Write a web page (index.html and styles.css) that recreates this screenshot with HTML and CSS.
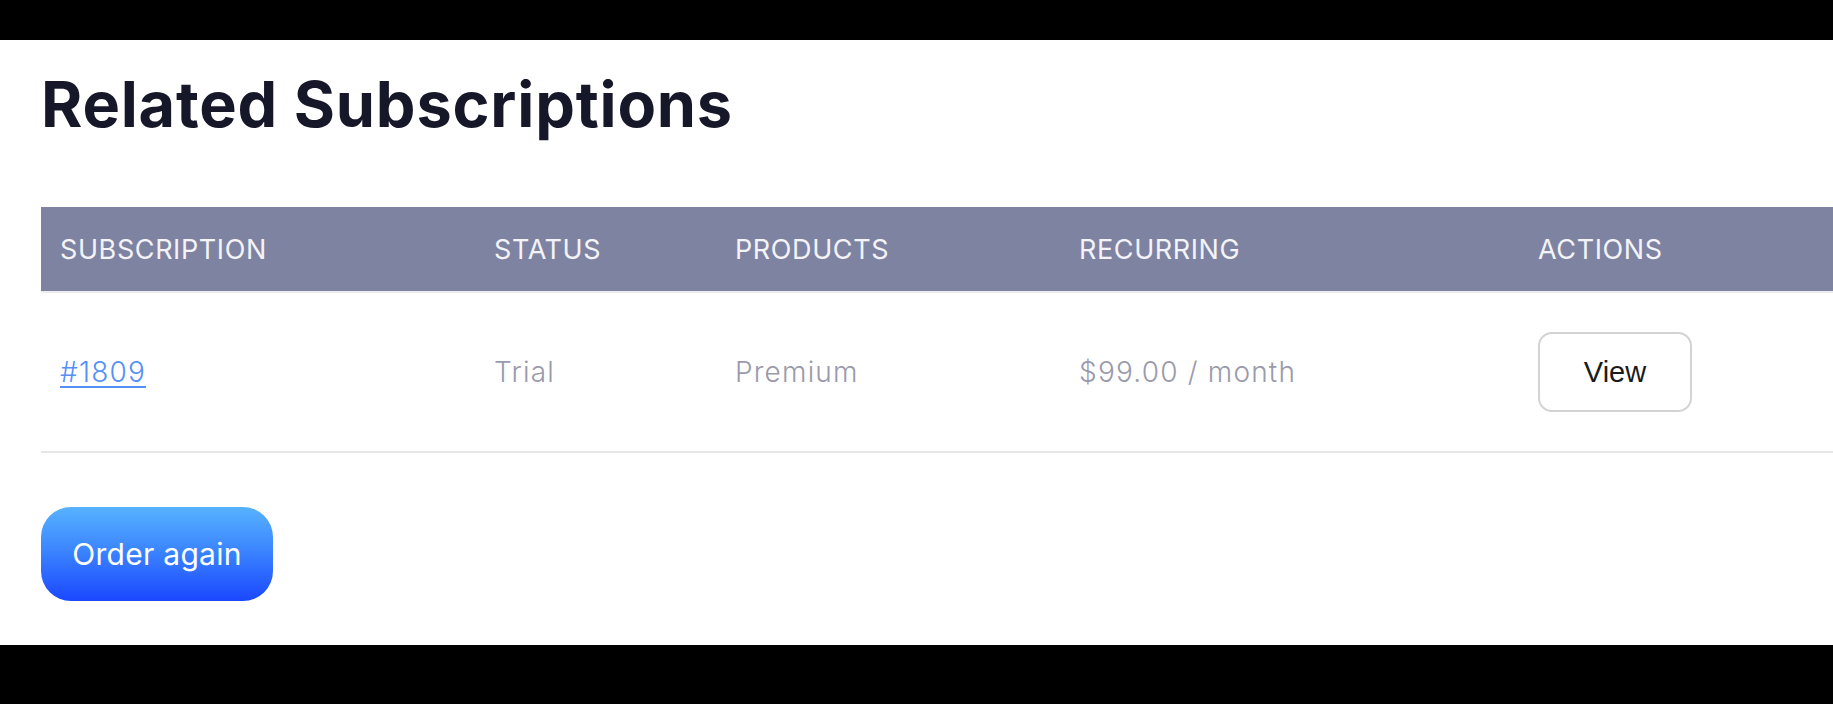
FILE: index.html
```html
<!DOCTYPE html>
<html lang="en">
<head>
<meta charset="utf-8">
<title>Related Subscriptions</title>
<link rel="stylesheet" href="styles.css">
</head>
<body>
<div class="frame">
  <section class="panel">
    <h2 class="title">Related Subscriptions</h2>
    <table class="subs">
      <colgroup>
        <col class="c1"><col class="c2"><col class="c3"><col class="c4"><col class="c5">
      </colgroup>
      <thead>
        <tr>
          <th>SUBSCRIPTION</th>
          <th>STATUS</th>
          <th>PRODUCTS</th>
          <th>RECURRING</th>
          <th>ACTIONS</th>
        </tr>
      </thead>
      <tbody>
        <tr>
          <td><a class="sub-link" href="#">#1809</a></td>
          <td>Trial</td>
          <td>Premium</td>
          <td>$99.00 / month</td>
          <td><a class="view-btn" href="#">View</a></td>
        </tr>
      </tbody>
    </table>
    <a class="order-btn" href="#">Order again</a>
  </section>
</div>
</body>
</html>
```

FILE: styles.css
```css
html, body {
  margin: 0;
  padding: 0;
  background: #000;
  overflow: hidden;
}

.frame {
  padding-top: 40px;
  height: 704px;
  box-sizing: border-box;
}

.panel {
  background: #fff;
  height: 605px;
  box-sizing: border-box;
  padding: 33px 0 0 41px;
  font-family: Inter, "Noto Sans", sans-serif;
}

.title {
  margin: 0;
  font-family: Inter, sans-serif;
  font-weight: 700;
  font-size: 63px;
  line-height: 63px;
  letter-spacing: 0.8px;
  color: #17172a;
}

.subs {
  margin-top: 71px;
  width: 1792px;
  table-layout: fixed;
  border-collapse: collapse;
}

.c1 { width: 434px; }
.c2 { width: 241px; }
.c3 { width: 344px; }
.c4 { width: 459px; }

.subs th {
  background: #7e83a2;
  color: #f3f3f8;
  font-weight: 400;
  font-size: 27px;
  letter-spacing: 0.6px;
  text-align: left;
  height: 85px;
  padding: 0 0 0 19px;
  border-bottom: 2px solid #ececf0;
  box-sizing: border-box;
}

.subs td {
  padding: 39px 0 39px 19px;
  font-size: 28px;
  font-weight: 300;
  letter-spacing: 1.2px;
  color: #9a9aab;
  border-bottom: 2px solid #e6e6e6;
  vertical-align: middle;
  height: 80px;
}

.sub-link {
  color: #5590f8;
  text-decoration: underline;
  text-decoration-thickness: 2px;
  text-underline-offset: 4px;
}

.view-btn {
  display: flex;
  align-items: center;
  justify-content: center;
  width: 154px;
  height: 80px;
  box-sizing: border-box;
  border: 2px solid #d3d3d3;
  border-radius: 14px;
  background: #fff;
  color: #1b1b1b;
  font-family: "Liberation Sans", Arial, sans-serif;
  font-weight: 400;
  font-size: 29px;
  letter-spacing: 0;
  text-decoration: none;
}

.order-btn {
  display: flex;
  align-items: center;
  justify-content: center;
  margin-top: 54px;
  width: 232px;
  height: 94px;
  box-sizing: border-box;
  border-radius: 30px;
  background: linear-gradient(180deg, #57b2ff 0%, #3c86ff 45%, #1b47ff 100%);
  color: #fff;
  font-size: 30px;
  font-weight: 400;
  letter-spacing: 0.3px;
  text-decoration: none;
}
```
